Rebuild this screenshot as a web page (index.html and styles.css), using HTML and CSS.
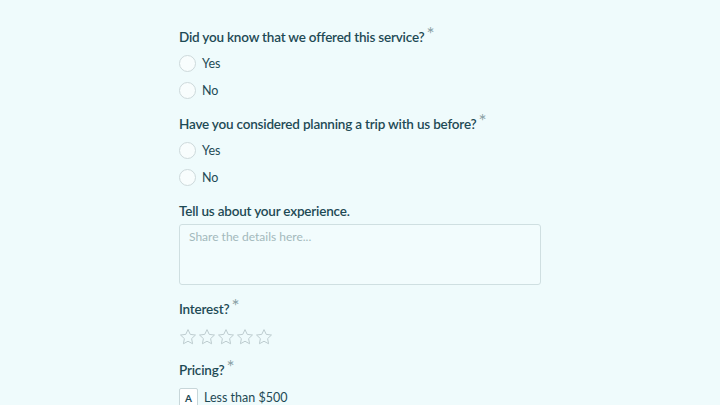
FILE: index.html
```
<!DOCTYPE html>
<html lang="en">
<head>
    <meta charset="UTF-8">
    <title>Trip Survey</title>
    <link rel="stylesheet" href="styles.css">
</head>
<body>
<div class="page">
    <form class="survey">
        <!-- Question 1 -->
        <div class="question">
            <div class="label">Did you know that we offered this service?<span class="req">*</span></div>
            <div class="choices">
                <label class="radio"><span class="dot"></span>Yes</label>
                <label class="radio"><span class="dot"></span>No</label>
            </div>
        </div>
        <!-- Question 2 -->
        <div class="question">
            <div class="label">Have you considered planning a trip with us before?<span class="req">*</span></div>
            <div class="choices">
                <label class="radio"><span class="dot"></span>Yes</label>
                <label class="radio"><span class="dot"></span>No</label>
            </div>
        </div>
        <!-- Free text -->
        <div class="question">
            <div class="label">Tell us about your experience.</div>
            <textarea class="details" placeholder="Share the details here..."></textarea>
        </div>
        <!-- Rating -->
        <div class="question">
            <div class="label">Interest?<span class="req">*</span></div>
            <div class="stars">
                <svg viewBox="0 0 20 20"><path d="M10 1.8l2.5 5.3 5.8.7-4.3 4 1.1 5.7L10 14.7l-5.1 2.8 1.1-5.7-4.3-4 5.8-.7z"/></svg>
                <svg viewBox="0 0 20 20"><path d="M10 1.8l2.5 5.3 5.8.7-4.3 4 1.1 5.7L10 14.7l-5.1 2.8 1.1-5.7-4.3-4 5.8-.7z"/></svg>
                <svg viewBox="0 0 20 20"><path d="M10 1.8l2.5 5.3 5.8.7-4.3 4 1.1 5.7L10 14.7l-5.1 2.8 1.1-5.7-4.3-4 5.8-.7z"/></svg>
                <svg viewBox="0 0 20 20"><path d="M10 1.8l2.5 5.3 5.8.7-4.3 4 1.1 5.7L10 14.7l-5.1 2.8 1.1-5.7-4.3-4 5.8-.7z"/></svg>
                <svg viewBox="0 0 20 20"><path d="M10 1.8l2.5 5.3 5.8.7-4.3 4 1.1 5.7L10 14.7l-5.1 2.8 1.1-5.7-4.3-4 5.8-.7z"/></svg>
            </div>
        </div>
        <!-- Pricing -->
        <div class="question">
            <div class="label">Pricing?<span class="req">*</span></div>
            <div class="options">
                <div class="option"><span class="key">A</span>Less than $500</div>
            </div>
        </div>
    </form>
</div>
</body>
</html>
```

FILE: styles.css
```
* {
    margin: 0;
    padding: 0;
    box-sizing: border-box;
}

body {
    background: #effbfc;
    font-family: 'Lato', 'Liberation Sans', sans-serif;
    color: #1e4a55;
    overflow: hidden;
}

.page {
    display: flex;
    justify-content: center;
    padding-top: 26px;
}

.survey {
    width: 362px;
    display: flex;
    flex-direction: column;
    gap: 12px;
}

/* Question label */
.label {
    font-size: 13.5px;
    font-weight: 600;
    letter-spacing: -0.2px;
    line-height: 22px;
}
.req {
    color: #8aa0a5;
    font-size: 19px;
    font-weight: 400;
    vertical-align: 1px;
    line-height: 0;
    margin-left: 2px;
}

/* Radio rows */
.choices {
    display: flex;
    flex-direction: column;
    gap: 5px;
    margin-top: 4px;
}
.radio {
    display: flex;
    align-items: center;
    gap: 6px;
    font-size: 12.5px;
    height: 22px;
}
.dot {
    width: 17px;
    height: 17px;
    border: 1.5px solid #cdd9db;
    border-radius: 50%;
    background: #f8fdfd;
}

/* Textarea */
.details {
    display: block;
    width: 362px;
    height: 61px;
    margin: 2px 0 1px;
    border: 1.5px solid #cfdfe1;
    border-radius: 3px;
    background: #f2fcfd;
    padding: 4px 9px;
    font-family: inherit;
    font-size: 12px;
    resize: none;
}
.details::placeholder {
    color: #a3b9bc;
}

/* Stars */
.stars {
    display: flex;
    gap: 1px;
    margin-top: 8px;
    padding-bottom: 1px;
}
.stars svg {
    width: 18px;
    height: 18px;
    fill: none;
    stroke: #bccbce;
    stroke-width: 1.1;
    stroke-linejoin: round;
}

/* Multiple choice */
.options {
    margin-top: 7px;
}
.option {
    display: flex;
    align-items: center;
    gap: 6px;
    font-size: 12.5px;
}
.key {
    width: 19px;
    height: 19px;
    border: 1px solid #c7d6d9;
    border-radius: 2px;
    background: #fff;
    font-size: 10px;
    font-weight: 700;
    display: flex;
    align-items: center;
    justify-content: center;
}
```
